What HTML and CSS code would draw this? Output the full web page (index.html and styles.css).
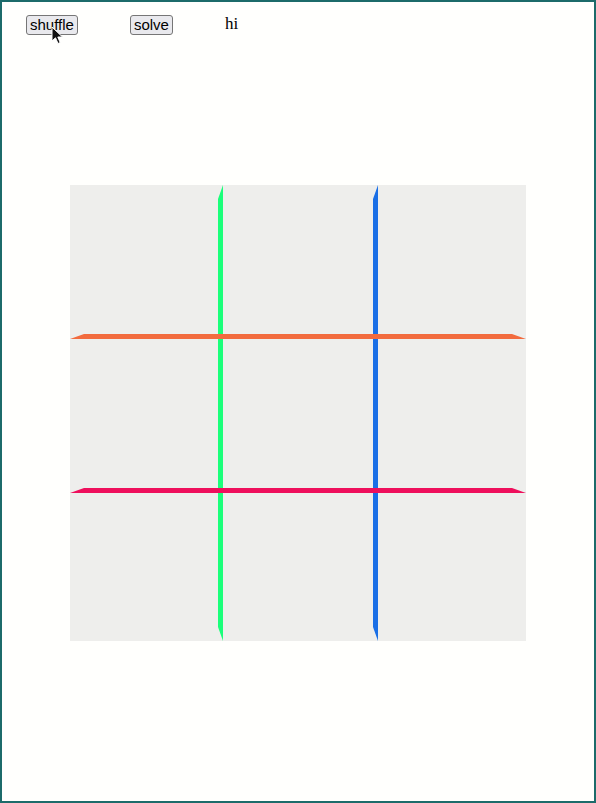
FILE: index.html
```html
<!DOCTYPE html>
<html>
<head>
<meta charset="utf-8">
<link rel="stylesheet" href="styles.css">
</head>
<body>
<div class="frame">
  <div class="toolbar">
    <button class="btn">shuffle</button>
    <button class="btn">solve</button>
    <span class="msg">hi</span>
    <svg class="cursor" width="14" height="20" viewBox="0 0 14 20"><path d="M1 1 L1 15 L4.5 11.8 L7 17.5 L9.2 16.5 L6.8 11 L11.5 11 Z" fill="#111" stroke="#fff" stroke-width="1"/></svg>
  </div>
  <div class="stage">
    <div class="board">
      <div class="tile"></div><div class="tile"></div><div class="tile"></div>
      <div class="tile"></div><div class="tile"></div><div class="tile"></div>
      <div class="tile"></div><div class="tile"></div><div class="tile"></div>
      <div class="line v v1"></div>
      <div class="line v v2"></div>
      <div class="line h h1"></div>
      <div class="line h h2"></div>
    </div>
  </div>
</div>
</body>
</html>
```
FILE: styles.css
```css
html, body {
  margin: 0;
  padding: 0;
  background: #fffffd;
}
.frame {
  box-sizing: border-box;
  width: 596px;
  height: 803px;
  border: 2px solid #1c6b6a;
  background: #fffffd;
  padding: 12px 0 0 24px;
}
.toolbar {
  position: relative;
  display: flex;
  align-items: center;
  gap: 52px;
  height: 22px;
}
.btn {
  font-family: "Liberation Sans", Arial, sans-serif;
  font-size: 15px;
  line-height: 16px;
  padding: 1px 3px;
  margin: 0;
  border: 1px solid #767676;
  border-radius: 3px;
  background: #e9e9ed;
  color: #000;
}
.msg {
  font-family: "Liberation Serif", "Times New Roman", serif;
  font-size: 17px;
  color: #000;
  margin-top: -2px;
}
.cursor {
  position: absolute;
  left: 25px;
  top: 12px;
}
.stage {
  padding: 149px 0 0 44px;
}
.board {
  position: relative;
  width: 456px;
  height: 456px;
  display: grid;
  grid-template-columns: repeat(3, 152px);
  grid-template-rows: repeat(3, 152px);
  background: #eeeeec;
}
.tile {
  background: #eeeeec;
}
.line {
  position: absolute;
}
.v {
  top: 0;
  width: 5px;
  height: 456px;
  clip-path: polygon(0 14px, 100% 0, 100% 100%, 0 calc(100% - 14px));
}
.v1 { left: 148px; background: #1aff7a; }
.v2 { left: 303px; background: #1a6fe6; }
.h {
  left: 0;
  width: 456px;
  height: 5px;
  clip-path: polygon(14px 0, calc(100% - 14px) 0, 100% 100%, 0 100%);
}
.h1 { top: 149px; background: #f26b3e; }
.h2 { top: 303px; background: #ee0f5c; }
```
